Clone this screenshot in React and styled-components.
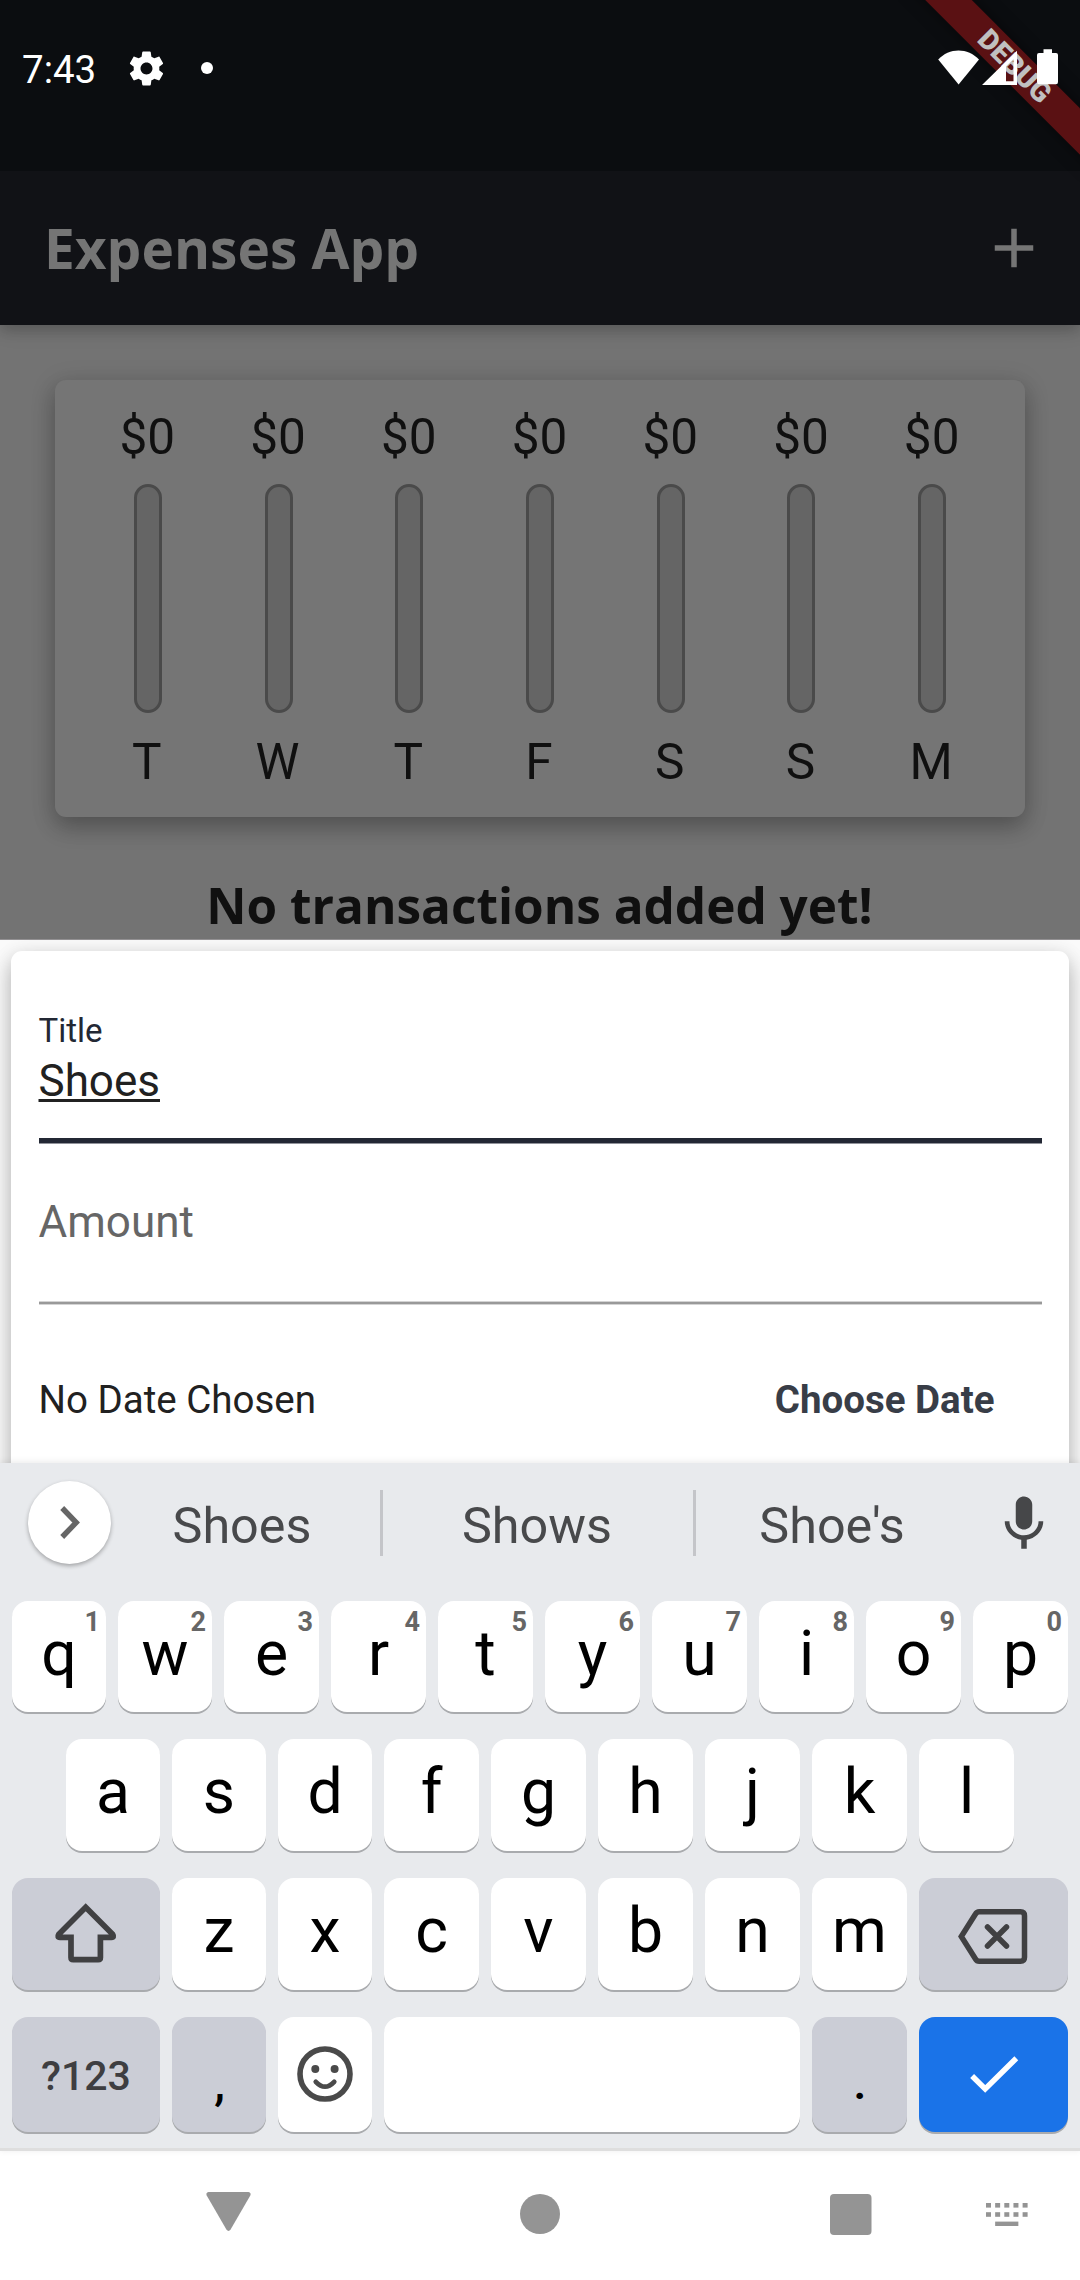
import React from "react";
import styled, { createGlobalStyle } from "styled-components";

const GlobalStyle = createGlobalStyle`
  *, *::before, *::after { box-sizing: border-box; }
  body { margin: 0; background: #ffffff; }
  svg { display: block; flex: none; overflow: visible; }
`;

const Phone = styled.div`
  position: relative;
  width: 1080px;
  height: 2280px;
  display: flex;
  flex-direction: column;
  overflow: hidden;
  background: #737373;
  font-family: Roboto, "Noto Sans", sans-serif;
`;

/* ---------- status bar ---------- */

const StatusBar = styled.header`
  flex: none;
  height: 171px;
  padding: 43px 22px 0;
  display: flex;
  align-items: flex-start;
  justify-content: space-between;
  background: #0b0d10;
  color: #ffffff;
`;

const StatusGroup = styled.div`
  position: relative;
  z-index: 3;
  height: 50px;
  display: flex;
  align-items: center;
`;

const Clock = styled.span`
  width: 104px;
  padding-top: 4px;
  font-size: 38.5px;
  line-height: 50px;
`;

const Dot = styled.span`
  width: 12px;
  height: 12px;
  margin-left: 34px;
  border-radius: 50%;
  background: #ffffff;
`;

/* The ribbon lies across the top right corner. */
const Ribbon = styled.div`
  position: absolute;
  z-index: 2;
  left: 884.2px;
  top: 49.3px;
  width: 260px;
  height: 33px;
  padding-left: 2px;
  transform: rotate(45deg);
  background: #5a1113;
  box-shadow: 0 0 16px rgba(0, 0, 0, 0.5);
  color: #c0c0c0;
  font-size: 28.3px;
  font-weight: 900;
  line-height: 33px;
  text-align: center;
`;

/* ---------- app bar and chart ---------- */

const AppBar = styled.div`
  position: relative;
  z-index: 1;
  flex: none;
  height: 154px;
  padding: 0 33px 0 44px;
  display: flex;
  align-items: center;
  justify-content: space-between;
  background: #111216;
  box-shadow: 0 6px 12px rgba(0, 0, 0, 0.16), 0 2px 24px rgba(0, 0, 0, 0.1);
  clip-path: inset(0 0 -60px 0);
  color: #757575;
`;

const AppTitle = styled.h1`
  margin: 0;
  font-family: "Open Sans", "Noto Sans", sans-serif;
  font-size: 55px;
  font-weight: 700;
  line-height: 76px;
`;

const Body = styled.main`
  flex: none;
  height: 614px;
  padding: 55px 55px 0;
  background: #737373;
  color: #101010;
`;

const ChartCard = styled.section`
  height: 437px;
  padding: 27.5px;
  display: flex;
  border-radius: 11px;
  background: #757575;
  box-shadow: 0 11px 22px rgba(0, 0, 0, 0.2), 0 4px 26px rgba(0, 0, 0, 0.15);
`;

const Day = styled.div`
  flex: 1;
  display: flex;
  flex-direction: column;
  align-items: center;
  font-size: 49.5px;
  line-height: 58px;
`;

const DayText = styled.span`
  flex: none;
  padding-right: ${(p) => p.$trim}px;
`;

const Bar = styled.div`
  flex: none;
  width: 28px;
  height: 229px;
  margin: 18.5px 0 20px;
  border: 3px solid #4a4a4a;
  border-radius: 14px;
  background: #656565;
`;

const EmptyMessage = styled.p`
  margin: 53.5px 0 0;
  padding-right: 1px;
  font-family: "Open Sans", "Noto Sans", sans-serif;
  font-size: 49.5px;
  font-weight: 700;
  line-height: 68px;
  text-align: center;
  white-space: nowrap;
`;

/* ---------- new transaction sheet ---------- */

const Sheet = styled.section`
  position: relative;
  z-index: 1;
  flex: none;
  height: 524px;
  padding: 11px 11px 0;
  overflow: hidden;
  background: #fafafa;
  border-top: 1px solid #929092;
`;

const FormCard = styled.div`
  height: 600px;
  padding: 60px 27.5px 0;
  border-radius: 11px;
  background: #ffffff;
  box-shadow: 0 11px 22px rgba(0, 0, 0, 0.22), 0 4px 20px rgba(0, 0, 0, 0.12);
`;

const Field = styled.div`
  display: flex;
  flex-direction: column;
  align-items: flex-start;
  height: ${(p) => p.$height}px;
  border-bottom: ${(p) => (p.$focused ? "5px solid #232834" : "2px solid #999999")};
  box-shadow: ${(p) => (p.$focused ? "0 1px 0 #91939a" : "0 1px 0 #d4d4d4, inset 0 -1px 0 #d4d4d4")};
`;

const FieldLabel = styled.label`
  font-size: 33px;
  line-height: 39px;
  color: #232834;
`;

const FieldValue = styled.span`
  margin-top: 5px;
  font-size: 44px;
  line-height: 52px;
  color: #212121;
  text-decoration: underline;
  text-decoration-thickness: 2.5px;
  text-underline-offset: 2.5px;
  text-decoration-skip-ink: none;
`;

const Placeholder = styled.span`
  margin-top: 53px;
  font-size: 44px;
  line-height: 52px;
  color: #666666;
`;

const DateRow = styled.div`
  margin-top: 73px;
  padding-right: 47px;
  display: flex;
  justify-content: space-between;
  font-size: 38.5px;
  line-height: 46px;
  color: #212121;
`;

const DateButton = styled.button`
  padding: 0;
  border: 0;
  background: none;
  color: #383d47;
  font: inherit;
  font-weight: 700;
`;

/* ---------- keyboard ---------- */

const Keyboard = styled.section`
  position: relative;
  z-index: 2;
  flex: none;
  height: 688px;
  background: #e8eaed;
  border-bottom: 3px solid #dedede;
  box-shadow: 0 -1px 7px rgba(0, 0, 0, 0.09);
`;

const SuggestionBar = styled.div`
  height: 119px;
  padding-left: 27.5px;
  display: flex;
  align-items: center;
`;

const ExpandButton = styled.button`
  width: 83.5px;
  height: 83.5px;
  margin: 0;
  padding: 0 0 0 2px;
  border: 0;
  border-radius: 50%;
  display: grid;
  place-items: center;
  background: #ffffff;
  box-shadow: 0 2px 4px rgba(0, 0, 0, 0.3);
`;

const Suggestion = styled.span`
  width: ${(p) => p.$width}px;
  padding: 6px ${(p) => p.$trim}px 0 0;
  text-align: center;
  font-size: 50.3px;
  line-height: 58px;
  color: #48494b;
`;

const Divider = styled.span`
  width: 3px;
  height: 66px;
  background: #c4c5c9;
`;

const MicSlot = styled.span`
  margin: 2px 0 0 21px;
`;

const Keys = styled.div`
  padding: 19px 12px 0;
  display: flex;
  flex-direction: column;
  gap: 27px;
`;

const KeyRow = styled.div`
  display: flex;
  gap: 12px;
  height: ${(p) => p.$height}px;
  padding: 0 ${(p) => p.$inset || 0}px;
`;

const tones = { light: "#ffffff", dark: "#cbcdd6", action: "#1a73e8" };

const Key = styled.button`
  position: relative;
  flex: ${(p) => (p.$width ? `0 0 ${p.$width}px` : "1 1 0")};
  min-width: 0;
  margin: 0;
  padding: 0 0 ${(p) => p.$lift || 0}px;
  border: 0;
  border-radius: 16px;
  display: flex;
  align-items: center;
  justify-content: center;
  background: ${(p) => tones[p.$tone || "light"]};
  box-shadow: 0 2px 0 #a9abae;
  color: #000000;
  font-family: inherit;
  font-size: 62.5px;
  line-height: 74px;
`;

const Hint = styled.span`
  position: absolute;
  top: 5px;
  right: 6px;
  font-size: 27px;
  font-weight: 700;
  line-height: 32px;
  color: #666666;
`;

const ModeLabel = styled.span`
  padding-top: 3px;
  font-size: 41px;
  font-weight: 500;
  color: #3e3e41;
`;

const Punctuation = styled.span`
  padding: 17px 0 0 1px;
  font-size: 48px;
  font-weight: 500;
`;

const BackspaceSlot = styled.span`
  padding: 5px 2px 0 0;
`;

/* ---------- navigation bar ---------- */

const NavBar = styled.nav`
  flex: 1;
  display: grid;
  grid-template-columns: 314px 310px 156px auto;
  align-items: start;
  padding: 40px 0 0 206px;
  background: #ffffff;
  color: #949494;
`;

const NavItem = styled.span`
  display: flex;
  padding-top: ${(p) => p.$drop || 0}px;
`;

const days = ["T", "W", "T", "F", "S", "S", "M"];

const keyWidth = (index, narrow) => (index < narrow ? 94 : 95);

const GearIcon = () => (
  <svg width="41" height="41" viewBox="0 0 24 24" fill="currentColor">
    <path d="M19.43 12.98c.04-.32.07-.64.07-.98s-.03-.66-.07-.98l2.11-1.65c.19-.15.24-.42.12-.64l-2-3.46c-.12-.22-.39-.3-.61-.22l-2.49 1c-.52-.4-1.08-.73-1.69-.98l-.38-2.65C14.46 2.18 14.25 2 14 2h-4c-.25 0-.46.18-.49.42l-.38 2.65c-.61.25-1.17.59-1.69.98l-2.49-1c-.23-.09-.49 0-.61.22l-2 3.46c-.13.22-.07.49.12.64l2.11 1.65c-.04.32-.07.65-.07.98s.03.66.07.98l-2.11 1.65c-.19.15-.24.42-.12.64l2 3.46c.12.22.39.3.61.22l2.49-1c.52.4 1.08.73 1.69.98l.38 2.65c.03.24.24.42.49.42h4c.25 0 .46-.18.49-.42l.38-2.65c.61-.25 1.17-.59 1.69-.98l2.49 1c.23.09.49 0 .61-.22l2-3.46c.12-.22.07-.49-.12-.64l-2.11-1.65zM12 15.5c-1.93 0-3.5-1.57-3.5-3.5s1.57-3.5 3.5-3.5 3.5 1.57 3.5 3.5-1.57 3.5-3.5 3.5z" />
  </svg>
);

const SignalIcons = () => (
  <svg width="120" height="36" viewBox="938 50 120 36" fill="#ffffff">
    <path d="M938.2 59.6C949 47.4 968 47.4 979 59.6L958.6 84.4Z" />
    <path fillRule="evenodd" d="M982 85L1017 50.8V85ZM1006 66.5V81.2H1013.5V59Z" />
    <path d="M1043.5 49.3H1052V53H1056Q1058 53 1058 55V82Q1058 84.2 1056 84.2H1039Q1037 84.2 1037 82V55Q1037 53 1039 53H1043.5Z" />
  </svg>
);

const PlusIcon = () => (
  <svg width="66" height="66" viewBox="0 0 24 24" fill="currentColor">
    <path d="M19 13h-6v6h-2v-6H5v-2h6V5h2v6h6v2z" />
  </svg>
);

const ChevronIcon = () => (
  <svg width="20" height="33" viewBox="0 0 20 33" fill="none" stroke="#666666" strokeWidth="5.4">
    <path d="M2.2 2L16.2 16.5L2.2 31" />
  </svg>
);

const MicIcon = () => (
  <svg width="66" height="66" viewBox="0 0 24 24" fill="#464749">
    <path d="M12 14c1.66 0 2.99-1.34 2.99-3L15 5c0-1.66-1.34-3-3-3S9 3.34 9 5v6c0 1.66 1.34 3 3 3zm5.3-3c0 3-2.54 5.1-5.3 5.1S6.7 14 6.7 11H5c0 3.41 2.72 6.23 6 6.72V21h2v-3.28c3.28-.48 6-3.3 6-6.72h-1.7z" />
  </svg>
);

const ShiftIcon = () => (
  <svg width="62" height="60" viewBox="55 1903 62 60" fill="none" stroke="#404042" strokeWidth="5.7">
    <path d="M85.7 1907.3L112.6 1934.2Q114.5 1937.3 111.5 1937.3H100.4V1957.5Q100.4 1959.7 98.2 1959.7H73.2Q71 1959.7 71 1957.5V1937.3H59.9Q56.9 1937.3 58.8 1934.2Z" />
  </svg>
);

const BackspaceIcon = () => (
  <svg width="70" height="56" viewBox="958 1909 70 56" fill="none" stroke="#404042" strokeWidth="5.5" strokeLinecap="round">
    <path d="M961.3 1936.5L975.5 1914Q976.8 1911.8 979.2 1911.8H1020.5Q1024.5 1911.8 1024.5 1915.8V1957.2Q1024.5 1961.2 1020.5 1961.2H979.2Q976.8 1961.2 975.5 1959Z" />
    <path d="M987.5 1927L1006.5 1946M1006.5 1927L987.5 1946" />
  </svg>
);

const SmileIcon = () => (
  <svg width="56" height="56" viewBox="0 0 56 56" fill="none" stroke="#4a4a4a">
    <circle cx="28" cy="28" r="25" strokeWidth="5.6" />
    <path d="M18.8 35.8Q28 45.6 37.2 35.8" strokeWidth="4.8" strokeLinecap="round" />
    <circle cx="18.3" cy="23" r="4" fill="#4a4a4a" stroke="none" />
    <circle cx="37.6" cy="23" r="4" fill="#4a4a4a" stroke="none" />
  </svg>
);

const CheckIcon = () => (
  <svg width="48" height="37" viewBox="969.5 2056 48 37" fill="none" stroke="#ffffff" strokeWidth="5.5">
    <path d="M971.6 2076L984.7 2089L1015.8 2058.3" />
  </svg>
);

const BackIcon = () => (
  <svg width="45" height="39" viewBox="0 0 45 39" fill="currentColor">
    <path d="M2.5 0H42.5Q45.5 .6 44.3 3.6L24.6 37.5Q22.5 40.3 20.4 37.5L.7 3.6Q-.5 .6 2.5 0Z" />
  </svg>
);

const HomeIcon = () => (
  <svg width="40" height="40" viewBox="0 0 40 40" fill="currentColor">
    <circle cx="20" cy="20" r="20" />
  </svg>
);

const RecentIcon = () => (
  <svg width="41.5" height="41" viewBox="0 0 41.5 41" fill="currentColor">
    <rect width="41.5" height="41" rx="4" />
  </svg>
);

const KeyboardIcon = () => (
  <svg width="42" height="23" viewBox="0 0 42 23" fill="currentColor">
    {[0, 9.2].map((y) =>
      [0, 9.15, 18.3, 27.45, 36.6].map((x) => (
        <rect key={`${x}-${y}`} x={x} y={y} width="5" height="4.6" />
      ))
    )}
    <rect x="9.15" y="18.6" width="23.2" height="4.4" />
  </svg>
);

export default function App() {
  return (
    <>
      <GlobalStyle />
      <Phone>
        <StatusBar>
          <StatusGroup>
            <Clock>7:43</Clock>
            <GearIcon />
            <Dot />
          </StatusGroup>
          <StatusGroup>
            <SignalIcons />
          </StatusGroup>
        </StatusBar>
        <Ribbon>DEBUG</Ribbon>

        <AppBar>
          <AppTitle>Expenses App</AppTitle>
          <PlusIcon />
        </AppBar>

        <Body>
          <ChartCard>
            {days.map((day, i) => (
              <Day key={i}>
                <DayText $trim={1}>$0</DayText>
                <Bar />
                <DayText $trim={2}>{day}</DayText>
              </Day>
            ))}
          </ChartCard>
          <EmptyMessage>No transactions added yet!</EmptyMessage>
        </Body>

        <Sheet>
          <FormCard>
            <Field $height={132} $focused>
              <FieldLabel>Title</FieldLabel>
              <FieldValue>Shoes</FieldValue>
            </Field>
            <Field $height={161}>
              <Placeholder>Amount</Placeholder>
            </Field>
            <DateRow>
              <span>No Date Chosen</span>
              <DateButton>Choose Date</DateButton>
            </DateRow>
          </FormCard>
        </Sheet>

        <Keyboard>
          <SuggestionBar>
            <ExpandButton>
              <ChevronIcon />
            </ExpandButton>
            <Suggestion $width={269} $trim={7}>Shoes</Suggestion>
            <Divider />
            <Suggestion $width={310} $trim={2}>Shows</Suggestion>
            <Divider />
            <Suggestion $width={274} $trim={2}>Shoe's</Suggestion>
            <MicSlot>
              <MicIcon />
            </MicSlot>
          </SuggestionBar>
          <Keys>
            <KeyRow $height={111}>
              {[..."qwertyuiop"].map((c, i) => (
                <Key key={c} $width={keyWidth(i, 2)} $lift={5}>
                  {c}
                  <Hint>{(i + 1) % 10}</Hint>
                </Key>
              ))}
            </KeyRow>
            <KeyRow $height={112} $inset={54}>
              {[..."asdfghjkl"].map((c, i) => (
                <Key key={c} $width={keyWidth(i, 3)} $lift={7}>{c}</Key>
              ))}
            </KeyRow>
            <KeyRow $height={112}>
              <Key $tone="dark" $width={148} $lift={2}>
                <ShiftIcon />
              </Key>
              {[..."zxcvbnm"].map((c, i) => (
                <Key key={c} $width={keyWidth(i, 2)} $lift={7}>{c}</Key>
              ))}
              <Key $tone="dark" $width={149}>
                <BackspaceSlot>
                  <BackspaceIcon />
                </BackspaceSlot>
              </Key>
            </KeyRow>
            <KeyRow $height={115}>
              <Key $tone="dark" $width={148}>
                <ModeLabel>?123</ModeLabel>
              </Key>
              <Key $tone="dark" $width={94}>
                <Punctuation>,</Punctuation>
              </Key>
              <Key $width={94} $lift={1}>
                <SmileIcon />
              </Key>
              <Key aria-label="Space" />
              <Key $tone="dark" $width={95}>
                <Punctuation>.</Punctuation>
              </Key>
              <Key $tone="action" $width={149}>
                <CheckIcon />
              </Key>
            </KeyRow>
          </Keys>
        </Keyboard>

        <NavBar>
          <NavItem $drop={0.5}>
            <BackIcon />
          </NavItem>
          <NavItem $drop={3}>
            <HomeIcon />
          </NavItem>
          <NavItem $drop={3}>
            <RecentIcon />
          </NavItem>
          <NavItem $drop={12}>
            <KeyboardIcon />
          </NavItem>
        </NavBar>
      </Phone>
    </>
  );
}
